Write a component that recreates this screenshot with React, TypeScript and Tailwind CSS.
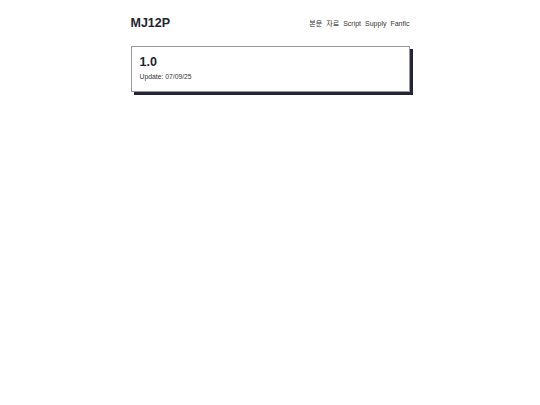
export default function App() {
  return (
    <div className="min-h-screen bg-white" style={{ fontFamily: '"Liberation Sans", "Noto Sans CJK KR", Arial, sans-serif' }}>
      <div className="mx-auto w-[279px] pt-[16px]">
        <header className="flex items-center justify-between h-[14px]">
          <h1 className="text-[12.5px] font-bold text-[#1f2330] leading-none">MJ12P</h1>
          <nav className="flex gap-[4px] text-[7px] text-[#333] leading-none">
            <span>본문</span>
            <span>자료</span>
            <span>Script</span>
            <span>Supply</span>
            <span>Fanfic</span>
          </nav>
        </header>
        <div className="mt-[16px] border border-[#9a9a9a] bg-white px-[8px] pt-[8px] pb-[9px] shadow-[3px_3px_0_#23233a]">
          <div className="text-[12.5px] font-bold text-[#1f2330] leading-[15px]">1.0</div>
          <div className="mt-[2px] text-[6.8px] text-[#333] leading-[10px]">Update: 07/09/25</div>
        </div>
      </div>
    </div>
  );
}
